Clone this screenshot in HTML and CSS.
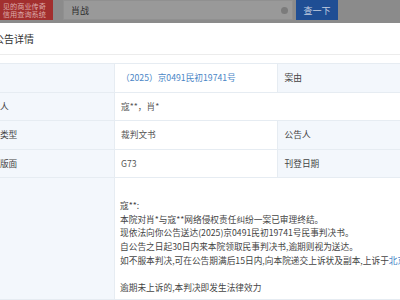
FILE: index.html
```html
<!DOCTYPE html>
<html lang="zh-CN">
<head>
  <meta charset="UTF-8">
  <title>公告详情</title>
  <link rel="stylesheet" href="styles.css">
</head>
<body>
    <!-- 顶部搜索栏 (遮罩下) -->
    <div class="topbar">
        <div class="brand">
            <span>见的商业传奇</span>
            <span>信用查询系统</span>
        </div>
        <div class="search">
            <span class="keyword">肖战</span>
            <span class="clear"></span>
        </div>
        <button class="search-btn">查一下</button>
    </div>

    <!-- 公告详情弹窗 -->
    <div class="modal">
        <div class="modal-head">公告详情</div>
        <div class="detail">
            <div class="cell label">案号</div>
            <div class="cell value link">（2025）京0491民初19741号</div>
            <div class="cell label">案由</div>
            <div class="cell value"></div>

            <div class="cell label">当事人</div>
            <div class="cell value wide">寇**，肖*</div>

            <div class="cell label">公告类型</div>
            <div class="cell value">裁判文书</div>
            <div class="cell label">公告人</div>
            <div class="cell value"></div>

            <div class="cell label">刊登版面</div>
            <div class="cell value">G73</div>
            <div class="cell label">刊登日期</div>
            <div class="cell value"></div>

            <div class="cell label"></div>
            <div class="cell content wide">
                <p>寇**:</p>
                <p>本院对肖*与寇**网络侵权责任纠纷一案已审理终结。</p>
                <p>现依法向你公告送达(2025)京0491民初19741号民事判决书。</p>
                <p>自公告之日起30日内来本院领取民事判决书,逾期则视为送达。</p>
                <p>如不服本判决,可在公告期满后15日内,向本院递交上诉状及副本,上诉于<span class="court">北京市第四中级人民法院</span>。</p>
                <p class="blank"></p>
                <p>逾期未上诉的,本判决即发生法律效力</p>
            </div>
        </div>
    </div>
</body>
</html>
```

FILE: styles.css
```css
body {
  margin: 0;
  width: 400px;
  height: 300px;
  overflow: hidden;
  background-color: #8b8b8b;
  font-family: "Noto Sans CJK SC", "Noto Sans", sans-serif;
  color: #444;
}

/* 顶部搜索栏 */
.topbar {
  display: flex;
  height: 20px;
  margin-bottom: 3px;
}

.brand {
  width: 53px;
  flex-shrink: 0;
  background-color: #a22f2e;
  color: #dcaaa9;
  font-size: 7.2px;
  line-height: 8.5px;
  display: flex;
  flex-direction: column;
  justify-content: center;
  align-items: flex-end;
  padding-right: 7px;
  box-sizing: border-box;
  white-space: nowrap;
  overflow: hidden;
}

.search {
  width: 230px;
  margin-left: 10px;
  background-color: #999999;
  border: 1px solid #909090;
  box-sizing: border-box;
  display: flex;
  align-items: center;
  justify-content: space-between;
  padding: 0 4px 0 7px;
}

.keyword {
  font-size: 9px;
  color: #2e2e2e;
}

.clear {
  width: 7px;
  height: 7px;
  border-radius: 50%;
  background-color: #7b7b7b;
}

.search-btn {
  width: 42px;
  margin-left: 3px;
  border: none;
  padding: 0;
  background-color: #1f4e94;
  color: #c5d0e2;
  font-family: inherit;
  font-size: 9px;
}

/* 弹窗 */
.modal {
  width: 520px;
  margin-left: -45px;
  height: 277px;
  background-color: #fff;
}

.modal-head {
  height: 31px;
  line-height: 31px;
  padding-left: 39px;
  font-size: 10px;
  color: #333;
  border-bottom: 1px solid #ececec;
}

.detail {
  margin: 8px 20px 0;
  display: grid;
  grid-template-columns: 138px 162px 124px 1fr;
  grid-template-rows: repeat(4, 27.5px) auto;
  gap: 1px;
  background-color: #e6ecf2;
  border: 1px solid #e6ecf2;
  font-size: 8.7px;
}

.cell {
  display: flex;
  align-items: center;
  padding: 0 6px;
  background-color: #fff;
  white-space: nowrap;
}

.label {
  background-color: #f3f7fc;
  color: #444;
  padding-left: 6.5px;
}

.value {
  color: #555;
}

.link {
  color: #4a86c6;
}

.wide {
  grid-column: span 3;
}

/* 公告正文 */
.content {
  display: block;
  padding: 21px 5px 4px;
  line-height: 13.7px;
  color: #444;
  overflow: hidden;
}

.content p {
  margin: 0;
  height: 13.7px;
}

.court {
  color: #4a86c6;
}
```
